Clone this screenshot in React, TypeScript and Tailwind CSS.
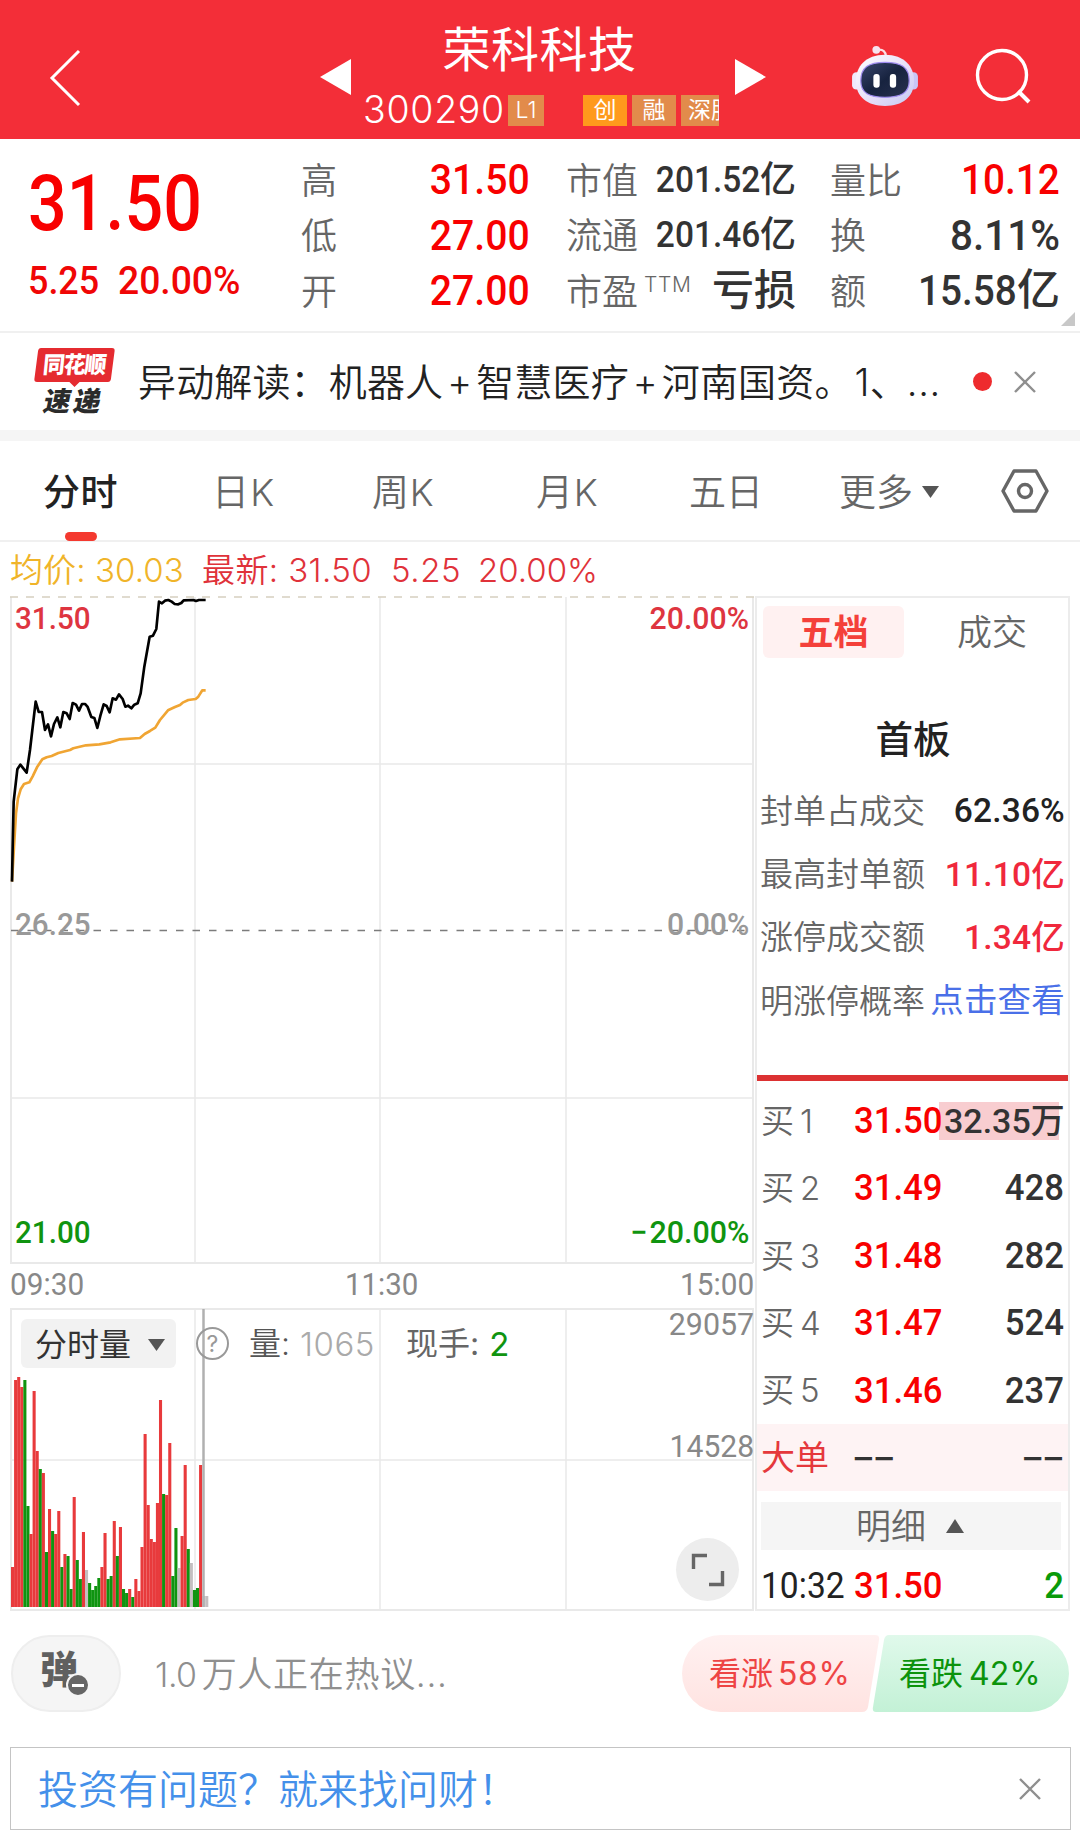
import React from 'react';

type Color = 'r' | 'g' | 'n';

// one bar per minute: height in px and direction
const VOLUME: [number, Color][] = [
  [40, 'r'], [227, 'r'], [230, 'r'], [220, 'r'], [227, 'g'], [101, 'g'], [73, 'r'], [216, 'r'],
  [156, 'r'], [138, 'g'], [134, 'r'], [55, 'g'], [98, 'r'], [76, 'g'], [73, 'r'], [96, 'r'],
  [40, 'g'], [53, 'r'], [51, 'g'], [18, 'g'], [110, 'r'], [47, 'g'], [28, 'g'], [75, 'r'],
  [37, 'n'], [24, 'g'], [17, 'g'], [21, 'g'], [29, 'g'], [40, 'r'], [74, 'r'], [28, 'g'],
  [31, 'g'], [86, 'r'], [51, 'g'], [80, 'r'], [18, 'g'], [14, 'g'], [18, 'r'], [10, 'g'],
  [28, 'r'], [16, 'r'], [60, 'r'], [173, 'r'], [102, 'r'], [68, 'r'], [65, 'r'], [104, 'r'],
  [207, 'r'], [113, 'g'], [112, 'r'], [164, 'r'], [31, 'g'], [79, 'g'], [39, 'n'], [71, 'r'],
  [142, 'r'], [58, 'g'], [44, 'n'], [17, 'g'], [19, 'g'], [142, 'r'], [11, 'n'], [11, 'n'],
];

const BAR_FILL = { r: '#e83a3c', g: '#0f9410', n: '#c4bfc0' };

const PRICE_LINE =
  '36,905 38,800 41,665 52,568 61,554 80,578 90,510 97,450 107,365 116,396 126,396 135,450 144,433 153,469 162,432 172,412 181,442 190,396 200,400 209,417 218,369 228,374 237,392 246,372 255,372 263,381 274,411 283,414 292,444 301,408 311,373 320,378 329,397 338,355 348,359 357,343 368,357 376,380 384,377 394,385 403,374 413,370 422,340 433,260 449,170 459,167 469,147 477,65 486,70 495,62 505,60 515,65 524,72 535,73 544,69 551,61 580,60 588,63 597,60 617,60';

const AVG_LINE =
  '36,905 42,800 48,700 54,655 62,628 72,612 88,607 98,589 112,560 127,538 140,532 155,528 175,519 210,510 220,505 258,496 298,493 332,487 360,478 420,474 434,462 450,453 466,443 480,420 504,391 525,381 540,375 548,368 565,360 587,357 595,350 607,331 617,331';

const BUY_ROWS = [
  { level: 1, price: '31.50', amount: '32.35万' },
  { level: 2, price: '31.49', amount: '428' },
  { level: 3, price: '31.48', amount: '282' },
  { level: 4, price: '31.47', amount: '524' },
  { level: 5, price: '31.46', amount: '237' },
];

const LIMIT_ROWS = [
  { label: '封单占成交', value: '62.36%', style: 'font-medium text-[#222]' },
  { label: '最高封单额', value: '11.10亿', style: 'font-medium text-[#f0283c]' },
  { label: '涨停成交额', value: '1.34亿', style: 'font-medium text-[#f0283c]' },
  { label: '明涨停概率', value: '点击查看', style: 'text-[#4a70e8]' },
];

const Close: React.FC = () => (
  <svg className="h-[22px] w-[22px]" viewBox="0 0 22 22" fill="none" stroke="#8f8f8f" strokeWidth="2.4">
    <path d="M1 1L21 21M21 1L1 21" />
  </svg>
);

const Header: React.FC = () => (
  <header className="flex h-[139px] bg-[#f32e38] text-white">
    <div className="flex w-[320px] items-center pt-[17px] pl-[48px]">
      <svg className="h-[58px] w-[34px]" viewBox="0 0 34 58" fill="none" stroke="#fff" strokeWidth="3">
        <path d="M31 2L4 29L31 56" />
      </svg>
    </div>
    <div className="flex w-[40px] items-center pt-[14px]">
      <svg className="h-[36px] w-[32px]" viewBox="0 0 32 36" fill="#fff">
        <path d="M0 18L31 0V36Z" />
      </svg>
    </div>
    <div className="flex w-[359px] flex-col">
      <h1 className="mt-[25px] text-center text-[48px] leading-[50px] tracking-[0.5px]">荣科科技</h1>
      <div className="mt-[12px] flex items-center pl-[3px]">
        <span className="w-[145px] shrink-0 text-[37.5px] leading-[46px] font-[350] tracking-[0.7px] whitespace-nowrap">300290</span>
        <span className="flex h-[31px] w-[36px] shrink-0 items-center justify-center bg-[#e28b4b] text-[23px] font-light">L1</span>
        <div className="ml-[39px] flex gap-[5px] text-[23px]">
          <span className="flex h-[31px] w-[44px] shrink-0 items-center justify-center bg-[#ff9a1c]">创</span>
          <span className="flex h-[31px] w-[44px] shrink-0 items-center justify-center bg-[#e28b4b]">融</span>
          <span className="h-[31px] w-[38px] shrink-0 overflow-hidden bg-[#e28b4b] pl-[7px] leading-[31px] whitespace-nowrap">深股</span>
        </div>
      </div>
    </div>
    <div className="flex w-[133px] items-center pt-[14px] pl-[16px]">
      <svg className="h-[36px] w-[32px]" viewBox="0 0 32 36" fill="#fff">
        <path d="M0 0L31 18L0 36Z" />
      </svg>
    </div>
    <div className="flex items-center pt-[13px]">
      <svg className="h-[62px] w-[66px]" viewBox="0 0 68 64">
        <defs>
          <linearGradient id="shell" x1="0" y1="0" x2="1" y2="1">
            <stop offset="0" stopColor="#fff" />
            <stop offset="0.6" stopColor="#e4dcf8" />
            <stop offset="1" stopColor="#c3c8f2" />
          </linearGradient>
          <linearGradient id="visor" x1="0" y1="0" x2="1" y2="1">
            <stop offset="0" stopColor="#39466c" />
            <stop offset="0.5" stopColor="#17233f" />
            <stop offset="1" stopColor="#28314f" />
          </linearGradient>
        </defs>
        <path d="M26 5C32 4 35 7 35 12" fill="none" stroke="#fbdfe4" strokeWidth="2.4" />
        <circle cx="25" cy="5" r="4" fill="#f7e3ef" />
        <rect x="0" y="28" width="9" height="18" rx="4.5" fill="#efeafc" />
        <rect x="59" y="28" width="9" height="18" rx="4.5" fill="#c9c6f6" />
        <path d="M34 10C54 10 64 22 64 37C64 54 52 63 34 63C16 63 4 54 4 37C4 22 14 10 34 10Z" fill="url(#shell)" />
        <path d="M34 18C51 18 59 23 59 37C59 50 50 54 34 54C18 54 9 50 9 37C9 23 17 18 34 18Z" fill="url(#visor)" stroke="#a08df0" strokeWidth="1.2" />
        <rect x="22" y="30" width="6.5" height="14" rx="3" fill="#fff" />
        <rect x="39" y="30" width="6.5" height="14" rx="3" fill="#fff" />
      </svg>
      <svg className="mt-[2px] ml-[57px] h-[58px] w-[58px]" viewBox="0 0 58 58" fill="none" stroke="#fff" strokeWidth="3.4">
        <circle cx="27" cy="27" r="24.5" />
        <path d="M43 43L54 54" strokeWidth="4" />
      </svg>
    </div>
  </header>
);

const Quote: React.FC = () => (
  <section className="relative flex h-[194px] border-b-2 border-[#f0f0f0] font-['Roboto','Noto_Sans_CJK_SC',sans-serif] font-medium text-[#333]">
    <div className="w-[301px] pl-[28px] text-[#f80000]">
      <div className="mt-[35px] origin-left scale-x-[0.885] text-[77px] leading-[60px]">31.50</div>
      <div className="mt-[25px] flex text-[39px] leading-[44px] text-[#f00606]">
        <span className="w-[90px] origin-left scale-x-[0.92]">5.25</span>
        <span className="origin-left scale-x-[0.955]">20.00%</span>
      </div>
    </div>
    <div className="flex w-[229px] flex-col pt-[13px]">
      {[['高', '31.50'], ['低', '27.00'], ['开', '27.00']].map(([label, value]) => (
        <div key={label} className="flex h-[55.5px] items-center justify-between">
          <span className="pt-1 text-[36px] leading-none font-[350] text-[#666]">{label}</span>
          <span className="origin-right scale-x-[0.91] text-[43px] leading-none text-[#f80000]">{value}</span>
        </div>
      ))}
    </div>
    <div className="ml-[36px] flex w-[230px] flex-col pt-[13px]">
      <div className="flex h-[55.5px] items-center justify-between">
        <span className="pt-1 text-[36px] leading-none font-[350] text-[#666]">市值</span>
        <span className="text-[36px] leading-none"><span className="inline-block origin-right scale-x-[0.93]">201.52</span>亿</span>
      </div>
      <div className="flex h-[55.5px] items-center justify-between">
        <span className="pt-1 text-[36px] leading-none font-[350] text-[#666]">流通</span>
        <span className="text-[36px] leading-none"><span className="inline-block origin-right scale-x-[0.93]">201.46</span>亿</span>
      </div>
      <div className="flex h-[55.5px] items-center justify-between">
        <span className="flex items-center font-[350] text-[#666]">
          <span className="pt-1 text-[36px] leading-none">市盈</span>
          <span className="mb-[12px] ml-[6px] font-['Inter'] text-[21px] leading-none font-light tracking-[0.7px]">TTM</span>
        </span>
        <span className="text-[42px] leading-none">亏损</span>
      </div>
    </div>
    <div className="ml-[34px] flex w-[230px] flex-col pt-[13px]">
      <div className="flex h-[55.5px] items-center justify-between">
        <span className="pt-1 text-[36px] leading-none font-[350] text-[#666]">量比</span>
        <span className="origin-right scale-x-[0.9] text-[43px] leading-none text-[#f80000]">10.12</span>
      </div>
      <div className="flex h-[55.5px] items-center justify-between">
        <span className="pt-1 text-[36px] leading-none font-[350] text-[#666]">换</span>
        <span className="origin-right scale-x-[0.94] text-[43px] leading-none">8.11%</span>
      </div>
      <div className="flex h-[55.5px] items-center justify-between">
        <span className="pt-1 text-[36px] leading-none font-[350] text-[#666]">额</span>
        <span className="text-[43px] leading-none"><span className="inline-block origin-right scale-x-[0.9]">15.58</span>亿</span>
      </div>
    </div>
    <svg className="absolute right-[5px] bottom-[5px] h-[14px] w-[14px]" viewBox="0 0 14 14" fill="#c8c8c8">
      <path d="M14 0V14H0Z" />
    </svg>
  </section>
);

const News: React.FC = () => (
  <section className="flex h-[108px] items-center border-b-[11px] border-[#f5f5f5] pl-[34px]">
    <div className="relative flex h-[68px] w-[80px] flex-col items-center">
      <svg className="absolute top-0 left-0 h-[40px] w-[81px]" viewBox="0 0 80 40" preserveAspectRatio="none" fill="#e52b30">
        <path d="M7 0H77Q80 0 79.600 3L76 31Q75.500 34 73 34H45L40 39L35 34H3Q0 34 .4 31L4 3Q4.500 0 7 0Z" />
      </svg>
      <span className="relative mt-[6px] -skew-x-6 scale-y-105 text-[22px] leading-[23px] font-black tracking-[-1.2px] text-white">同花顺</span>
      <span className="mt-[11px] -skew-x-12 text-[27px] leading-[27px] font-black tracking-[3px] text-[#2b2b2b]">速递</span>
    </div>
    <p className="ml-[24px] w-[806px] text-[38px] leading-none font-[350] tracking-[0.15px] whitespace-nowrap text-[#222]">
      异动解读：机器人<span className="mx-[4px]">+</span>智慧医疗<span className="mx-[4px]">+</span>河南国资。<span className="ml-[2px]">1</span>、<span className="ml-[-1px] tracking-[0.6px]">...</span>
    </p>
    <span className="ml-[29px] h-[19px] w-[19px] rounded-full bg-[#ee2b2e]"></span>
    <span className="ml-[22px]"><Close /></span>
  </section>
);

const Tabs: React.FC = () => (
  <nav className="flex h-[101px] items-center border-b-2 border-[#f0f0f0] text-[37px] leading-none font-[350] text-[#666]">
    <div className="relative ml-[43px] flex h-full w-[169px] items-center pt-[3px] font-medium tracking-[0.5px] text-[#222]">
      分时
      <span className="absolute -bottom-[1px] left-[22px] h-[9px] w-[32px] rounded-full bg-[#f4392f]"></span>
    </div>
    <div className="w-[160px] pt-[3px] tracking-[1.2px]">日K</div>
    <div className="w-[164px] pt-[3px] tracking-[0.8px]">周K</div>
    <div className="w-[153px] pt-[3px] tracking-[0.8px]">月K</div>
    <div className="w-[150px] pt-[3px]">五日</div>
    <div className="flex w-[162px] items-center pt-[3px]">
      更多
      <svg className="ml-[9px] h-[12px] w-[17px]" viewBox="0 0 17 12" fill="#555">
        <path d="M0 0H17L8.500 12Z" />
      </svg>
    </div>
    <svg className="h-[44px] w-[48px]" viewBox="0 0 48 44" fill="none" stroke="#666" strokeWidth="3.4" strokeLinejoin="round">
      <path d="M13 2H35L46 22L35 42H13L2 22Z" />
      <circle cx="24" cy="22" r="6.500" />
    </svg>
  </nav>
);

const Chart: React.FC = () => (
  <div className="relative h-[1014px] w-[745px] font-['Roboto','Noto_Sans_CJK_SC',sans-serif] text-[31px] leading-[32px]">
    <svg className="absolute top-0 left-0" width="745" height="1016" viewBox="0 0 745 1016" fill="none">
      <g stroke="#e9e9e9" strokeWidth="2">
        <path d="M1 1V667H743M743 1V667M0 713H743V1014H0M1 713V1014" />
        <path d="M1 168H743M1 502H743M1 864H743M185 1V667M370 1V667M556 1V667M185 713V1014M370 713V1014M556 713V1014" strokeWidth="1.500" />
      </g>
      <path d="M0 1H745" stroke="#d6cfc0" strokeWidth="1.500" strokeDasharray="8 8" />
      <path d="M1 334.500H743" stroke="#7c7c7c" strokeWidth="1.500" strokeDasharray="7.500 9" />
      {VOLUME.map(([h, c], i) => (
        <rect key={i} x={1 + i * 3.083} y={1011 - h} width={3.083} height={h} fill={BAR_FILL[c]} />
      ))}
      <path d="M193.500 713V1011" stroke="#b0b0b0" strokeWidth="2.500" />
      <g transform="translate(-10 -16) scale(.3333)" strokeWidth="8" strokeLinejoin="round">
        <polyline points={AVG_LINE} stroke="#f0a533" />
        <polyline points={PRICE_LINE} stroke="#000" />
      </g>
    </svg>
    <span className="absolute top-[7px] left-[5px] origin-left scale-x-[0.955] font-medium text-[#de3540]">31.50</span>
    <span className="absolute top-[7px] right-[6px] origin-right scale-x-[0.975] font-medium text-[#de3540]">20.00%</span>
    <span className="absolute top-[313px] left-[5px] origin-left scale-x-[0.955] font-medium text-[#999]">26.25</span>
    <span className="absolute top-[313px] right-[6px] origin-right scale-x-[0.975] font-medium text-[#999]">0.00%</span>
    <span className="absolute top-[621px] left-[5px] origin-left scale-x-[0.955] font-medium text-[#109410]">21.00</span>
    <span className="absolute top-[621px] right-[6px] flex origin-right scale-x-[0.98] font-medium text-[#109410]">
      <span className="mr-[2px]">−</span>20.00%
    </span>
    <div className="absolute top-[673px] left-0 flex w-[744px] justify-between text-[#888]">
      <span className="origin-left scale-x-[0.96]">09:30</span>
      <span className="scale-x-[0.95]">11:30</span>
      <span className="origin-right scale-x-[0.96]">15:00</span>
    </div>
    <div className="absolute top-[723px] left-[11px] flex h-[49px] items-center">
      <button className="flex h-[49px] w-[155px] items-center rounded-md bg-[#f2f2f2] pt-[2px] pl-[14px] text-[32px] text-[#333]">
        分时量
        <svg className="ml-[17px] h-[12px] w-[17px]" viewBox="0 0 17 12" fill="#555">
          <path d="M0 0H17L8.500 12Z" />
        </svg>
      </button>
      <span className="ml-[20px] flex h-[33px] w-[33px] items-center justify-center rounded-full border-2 border-[#999] font-['Inter'] text-[23px] text-[#999]">?</span>
      <span className="ml-[20px] font-['Inter','Noto_Sans_CJK_SC'] text-[32px] font-[350] text-[#555]">量:</span>
      <span className="ml-[10px] w-[80px] font-['Inter'] text-[33px] font-light tracking-[0.5px] text-[#aaa]">1065</span>
      <span className="ml-[26px] font-['Inter','Noto_Sans_CJK_SC'] text-[32px] text-[#666]">现手:</span>
      <span className="ml-[10px] font-['Inter'] text-[33px] text-[#109410]">2</span>
    </div>
    <span className="absolute top-[713px] right-[1px] origin-right scale-x-[0.98] text-[#888]">29057</span>
    <span className="absolute top-[835px] right-[1px] origin-right scale-x-[0.97] text-[#888]">14528</span>
    <div className="absolute top-[942px] left-[666px] flex h-[63px] w-[63px] items-center justify-center rounded-full bg-[#ededed]">
      <svg className="h-[34px] w-[34px]" viewBox="0 0 34 34" fill="none" stroke="#666" strokeWidth="3.400">
        <path d="M2.500 16V2.500H16M31.500 18V31.500H18" />
      </svg>
    </div>
  </div>
);

const OrderBook: React.FC = () => (
  <div className="flex h-[1015px] w-[315px] flex-col border-2 border-[#ececec] font-['Roboto','Noto_Sans_CJK_SC',sans-serif]">
    <div className="mt-[8px] ml-[6px] flex h-[52px] text-[35px] leading-none">
      <div className="flex w-[141px] items-center justify-center rounded-md bg-[#fff1f1] pt-[3px] font-bold text-[#f4403a]">五档</div>
      <div className="flex w-[160px] items-center pt-[3px] pl-[53px] font-[350] text-[#666]">成交</div>
    </div>
    <div className="mt-[64px] pl-[1px] text-center text-[37.5px] leading-[37px] font-medium text-[#222]">首板</div>
    <div className="mt-[21px] ml-[3px] flex w-[305px] flex-col">
      {LIMIT_ROWS.map((row) => (
        <div key={row.label} className="flex h-[63.3px] items-center justify-between whitespace-nowrap">
          <span className="text-[33px] leading-none font-[350] text-[#666]">{row.label}</span>
          <span className={`text-[33.5px] leading-none tracking-[0.2px] ${row.style}`}>{row.value}</span>
        </div>
      ))}
    </div>
    <div className="mt-[42px] h-[6px] bg-[#dc3132]"></div>
    <div className="mt-[7px] flex flex-col">
      {BUY_ROWS.map((row) => (
        <div key={row.level} className="flex h-[67.4px] items-center pr-[4px] pl-[4px] text-[36.5px] leading-none">
          <span className="w-[93px] font-['Inter','Noto_Sans_CJK_SC'] text-[33px] font-[350] text-[#666]">
            买<span className="ml-[6px] font-light">{row.level}</span>
          </span>
          <span className="w-[88px] origin-left scale-x-[0.95] font-medium text-[#f80000]">{row.price}</span>
          {row.level === 1 ? (
            <span className="-ml-[3px] flex h-[38px] w-[120px] items-center bg-[#f8cdd0] pl-[5px] text-[34px] font-medium whitespace-nowrap text-[#333]">{row.amount}</span>
          ) : (
            <span className="flex-1 origin-right scale-x-[0.95] text-right font-medium text-[#333]">{row.amount}</span>
          )}
        </div>
      ))}
    </div>
    <div className="-mt-[1px] flex h-[68px] items-center justify-between bg-[#fef3f4] pr-[6px] pl-[4px] text-[34px] leading-none">
      <div className="flex items-center">
        <span className="w-[90px] pt-[2px] text-[#e5383c]">大单</span>
        <span className="origin-left scale-x-[1.35] font-['Inter'] text-[40px] tracking-[-3px] text-[#333]">--</span>
      </div>
      <span className="origin-right scale-x-[1.35] font-['Inter'] text-[40px] tracking-[-3px] text-[#333]">--</span>
    </div>
    <div className="mt-[11px] ml-[4px] flex h-[49px] w-[300px] items-center justify-center bg-[#f5f5f5] pr-[2px] text-[35px] leading-none font-[350] text-[#666]">
      <span className="pt-[2px]">明细</span>
      <svg className="ml-[20px] h-[14px] w-[18px]" viewBox="0 0 18 14" fill="#555">
        <path d="M0 14H18L9 0Z" />
      </svg>
    </div>
    <div className="mt-[13px] flex h-[46px] items-center pr-[4px] pl-[4px] text-[36.5px] leading-none">
      <span className="w-[93px] origin-left scale-x-[0.92] text-[#222]">10:32</span>
      <span className="origin-left scale-x-[0.95] font-medium text-[#f80000]">31.50</span>
      <span className="flex-1 origin-right scale-x-[0.95] text-right font-medium text-[#0a9a0a]">2</span>
    </div>
  </div>
);

const CommentBar: React.FC = () => (
  <section className="mt-[24px] flex h-[77px] items-center pl-[11px]">
    <div className="relative flex h-[77px] w-[110px] items-center rounded-full border-2 border-[#eee] bg-[#f5f5f5] pl-[27px]">
      <span className="mb-[9px] text-[38px] leading-none font-black text-[#606060]">弹</span>
      <span className="absolute top-[36px] left-[53px] flex h-[24px] w-[24px] items-center justify-center rounded-full border-2 border-[#f5f5f5] bg-[#666]">
        <span className="h-[3px] w-[12px] bg-white"></span>
      </span>
    </div>
    <p className="ml-[34px] w-[527px] pt-[1px] text-[35px] leading-none font-[350] tracking-[0.7px] text-[#8f8f8f]">
      <span className="mr-[5px] text-[34px] tracking-[-0.5px]">1.0</span>万人正在热议...
    </p>
    <div className="relative flex h-[77px] w-[387px] items-center text-[32px] leading-none">
      <svg className="absolute inset-0" width="387" height="77" viewBox="0 0 387 77">
        <defs>
          <linearGradient id="up" x1="0" y1="0" x2="0" y2="1">
            <stop offset="0" stopColor="#fff1f1" />
            <stop offset="1" stopColor="#ffe3e1" />
          </linearGradient>
          <linearGradient id="down" x1="0" y1="0" x2="0" y2="1">
            <stop offset="0" stopColor="#e0f9eb" />
            <stop offset="1" stopColor="#c3f1d6" />
          </linearGradient>
        </defs>
        <path d="M38.500 0H193Q198 0 197 5L186 72Q185 77 180 77H38.500A38.500 38.500 0 0 1 38.500 0Z" fill="url(#up)" />
        <path d="M207 0H348.500A38.500 38.500 0 0 1 348.500 77H194Q190 77 191 72L202 5Q203 0 207 0Z" fill="url(#down)" />
      </svg>
      <span className="relative ml-[27px] w-[190px] text-[#ee4444]">看涨<span className="ml-[5px] tracking-[0.6px]">58%</span></span>
      <span className="relative text-[#0c930c]">看跌<span className="ml-[6px]">42%</span></span>
    </div>
  </section>
);

const App: React.FC = () => {
  return (
    <div className="flex h-[1846px] w-[1080px] flex-col overflow-hidden bg-white font-['Inter','Noto_Sans_CJK_SC',sans-serif]">
      <Header />
      <Quote />
      <News />
      <Tabs />
      <div className="flex h-[54px] items-center pt-[3px] pl-[10px] text-[33px] leading-none font-[350] text-[#e0323a]">
        <span className="w-[192px] tracking-[0.1px] text-[#f0b429]">均价: 30.03</span>
        <span className="w-[189px] tracking-[0.4px]">最新: 31.50</span>
        <span className="w-[87px] tracking-[0.6px]">5.25</span>
        <span>20.00%</span>
      </div>
      <div className="flex pl-[10px]">
        <Chart />
        <OrderBook />
      </div>
      <CommentBar />
      <section className="mt-[35px] ml-[10px] flex h-[83px] w-[1061px] items-center justify-between border border-[#c4c4c4] pr-[29px] pl-[27px]">
        <span className="pt-[2px] text-[40px] leading-none font-[350] text-[#4490ea]">投资有问题？就来找问财！</span>
        <Close />
      </section>
    </div>
  );
};

export default App;
